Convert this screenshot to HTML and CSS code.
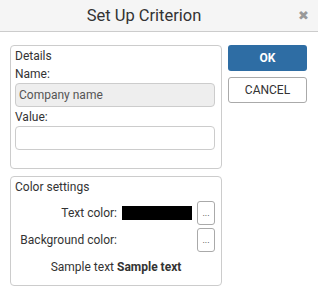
FILE: index.html
```html
<!DOCTYPE html>
<html>
<head>
<meta charset="utf-8">
<link rel="stylesheet" href="styles.css">
</head>
<body>
<div class="dialog">
  <div class="header">
    <span class="title">Set Up Criterion</span>
    <span class="close">&#x2716;</span>
  </div>
  <div class="content">
    <div class="left">
      <div class="group details">
        <div class="legend">Details</div>
        <div class="label">Name:</div>
        <div class="input readonly">Company name</div>
        <div class="label">Value:</div>
        <div class="input"></div>
      </div>
      <div class="group colors">
        <div class="legend">Color settings</div>
        <div class="row">
          <span class="rlabel">Text color:</span>
          <span class="swatch"></span>
          <span class="dots">...</span>
        </div>
        <div class="row">
          <span class="rlabel">Background color:</span>
          <span class="swatch empty"></span>
          <span class="dots">...</span>
        </div>
        <div class="sample">Sample text <b>Sample text</b></div>
      </div>
    </div>
    <div class="right">
      <div class="btn ok">OK</div>
      <div class="btn cancel">CANCEL</div>
    </div>
  </div>
</div>
</body>
</html>
```
FILE: styles.css
```css
html, body {
  margin: 0;
  padding: 0;
  background: #fff;
}
body {
  font-family: Roboto, "Liberation Sans", sans-serif;
  font-size: 12px;
  color: #333;
}
.dialog {
  width: 318px;
  height: 301px;
}
.header {
  height: 31px;
  background: #f5f5f5;
  border-bottom: 1px solid #ccc;
  display: flex;
  align-items: center;
  justify-content: center;
  padding-right: 30px;
  position: relative;
}
.title {
  font-size: 16.5px;
  color: #333;
}
.close {
  position: absolute;
  right: 9px;
  top: 8px;
  font-size: 13px;
  color: #999;
}
.content {
  display: flex;
  padding: 13px 11px 0 10px;
  gap: 6px;
}
.left {
  width: 212px;
  display: flex;
  flex-direction: column;
  gap: 7px;
}
.group {
  border: 1px solid #ccc;
  border-radius: 4px;
  padding: 2px 6px 0 4px;
}
.details {
  height: 120px;
}
.colors {
  height: 106px;
}
.legend {
  line-height: 16px;
  color: #333;
}
.label {
  line-height: 16px;
  margin-top: 2px;
}
.input {
  height: 22px;
  border: 1px solid #ccc;
  border-radius: 4px;
  margin-top: 1px;
  line-height: 22px;
  padding-left: 3px;
  color: #555;
}
.input.readonly {
  background: #eee;
}
.row {
  display: flex;
  align-items: center;
  justify-content: flex-end;
  margin-top: 6px;
  height: 24px;
  gap: 5px;
}
.row + .row {
  margin-top: 3px;
}
.rlabel {
  color: #333;
}
.swatch {
  width: 70px;
  height: 14px;
  background: #000;
}
.swatch.empty {
  background: transparent;
}
.dots {
  width: 16px;
  height: 22px;
  border: 1px solid #aaa;
  border-radius: 3px;
  font-size: 9px;
  display: flex;
  align-items: center;
  justify-content: center;
  color: #333;
}
.sample {
  text-align: center;
  margin-top: 7px;
  line-height: 16px;
  margin-right: -2px;
}
.right {
  width: 79px;
  display: flex;
  flex-direction: column;
  gap: 6px;
}
.btn {
  height: 26px;
  border-radius: 3px;
  display: flex;
  align-items: center;
  justify-content: center;
  font-size: 12px;
}
.ok {
  background: #2e6da4;
  color: #fff;
  font-weight: bold;
  height: 26px;
}
.cancel {
  border: 1px solid #aaa;
  height: 24px;
  color: #333;
}
```
